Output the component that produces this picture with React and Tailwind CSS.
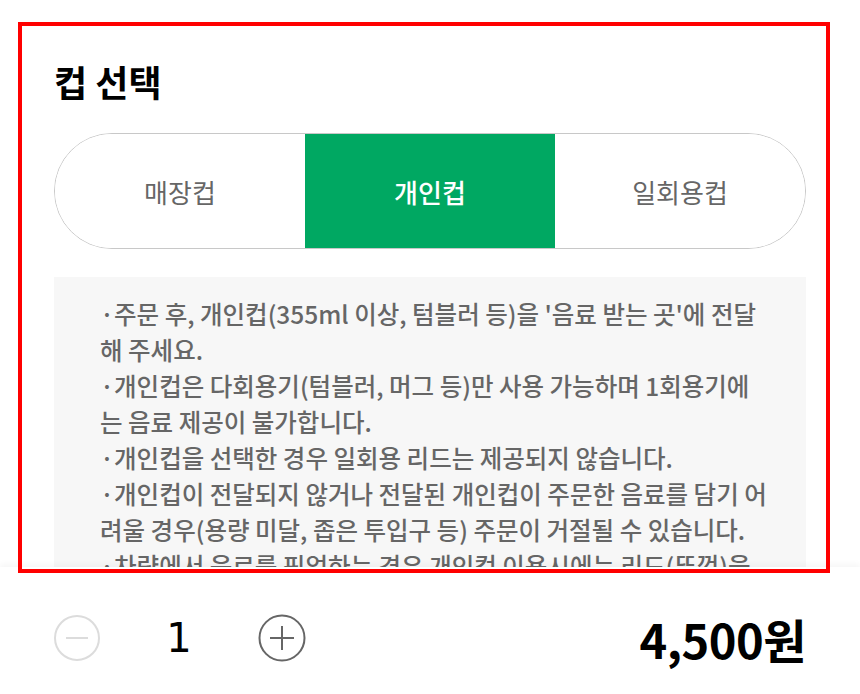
import React, { useState } from "react";

const CUP_TYPES = ["매장컵", "개인컵", "일회용컵"];

const NOTICES = [
  "·주문 후, 개인컵(355ml 이상, 텀블러 등)을 '음료 받는 곳'에 전달해 주세요.",
  "·개인컵은 다회용기(텀블러, 머그 등)만 사용 가능하며 1회용기에는 음료 제공이 불가합니다.",
  "·개인컵을 선택한 경우 일회용 리드는 제공되지 않습니다.",
  "·개인컵이 전달되지 않거나 전달된 개인컵이 주문한 음료를 담기 어려울 경우(용량 미달, 좁은 투입구 등) 주문이 거절될 수 있습니다.",
  "·차량에서 음료를 픽업하는 경우 개인컵 이용시에는 리드(뚜껑)을 꼭 지참해 주세요.",
];

const font = { fontFamily: '"Noto Sans CJK KR", "Noto Sans", sans-serif' };

const App = () => {
  const [cup, setCup] = useState(1);
  const [qty, setQty] = useState(1);

  return (
    <div
      className="relative flex h-[694px] w-[860px] flex-col overflow-hidden bg-white"
      style={font}
    >
      <div className="flex-1 overflow-hidden px-[54px] pt-[54px]">
        <h2 className="text-[36px] font-bold leading-[54px] text-black">
          컵 선택
        </h2>

        <div className="mt-[25px] flex h-[116px] overflow-hidden rounded-full border border-[#c8c8c8]">
          {CUP_TYPES.map((label, i) => (
            <button
              key={label}
              onClick={() => setCup(i)}
              className={
                cup === i
                  ? "flex-1 bg-[#00a862] text-[26px] font-medium text-white"
                  : "flex-1 bg-white text-[26px] text-[#666]"
              }
            >
              {label}
            </button>
          ))}
        </div>

        <div className="mt-[28px] bg-[#f7f7f7] pl-[46px] pr-[36px] pt-[19px] pb-[24px]">
          {NOTICES.map((line) => (
            <p
              key={line}
              className="text-[24.5px] font-medium leading-[36px] text-[#666]"
            >
              {line}
            </p>
          ))}
        </div>
      </div>

      {/* 수량 / 금액 하단 바 */}
      <div className="z-10 flex h-[127px] shrink-0 items-center justify-between bg-white px-[54px] pt-[15px] shadow-[0_-3px_6px_rgba(0,0,0,0.04)]">
        <div className="flex items-center">
          <button
            onClick={() => setQty(Math.max(1, qty - 1))}
            className="flex h-[46px] w-[46px] items-center justify-center"
          >
            <svg width="46" height="46" viewBox="0 0 46 46" fill="none">
              <circle cx="23" cy="23" r="22" stroke="#dcdcdc" strokeWidth="2" />
              <path d="M12 23h22" stroke="#dcdcdc" strokeWidth="2" />
            </svg>
          </button>
          <span
            className="w-[158px] text-center text-[40px] leading-none text-black"
            style={{ fontFamily: '"DejaVu Sans", sans-serif' }}
          >
            {qty}
          </span>
          <button
            onClick={() => setQty(qty + 1)}
            className="flex h-[48px] w-[48px] items-center justify-center"
          >
            <svg width="48" height="48" viewBox="0 0 48 48" fill="none">
              <circle cx="24" cy="24" r="22.5" stroke="#666" strokeWidth="2" />
              <path d="M12 24h24M24 12v24" stroke="#666" strokeWidth="2" />
            </svg>
          </button>
        </div>
        <div className="text-[47px] font-bold leading-none tracking-[-0.5px] text-black">
          {(4500 * qty).toLocaleString()}원
        </div>
      </div>

      <div className="pointer-events-none absolute left-[18px] top-[22px] z-20 h-[551px] w-[812px] border-4 border-[#ff0000]" />
    </div>
  );
};

export default App;
